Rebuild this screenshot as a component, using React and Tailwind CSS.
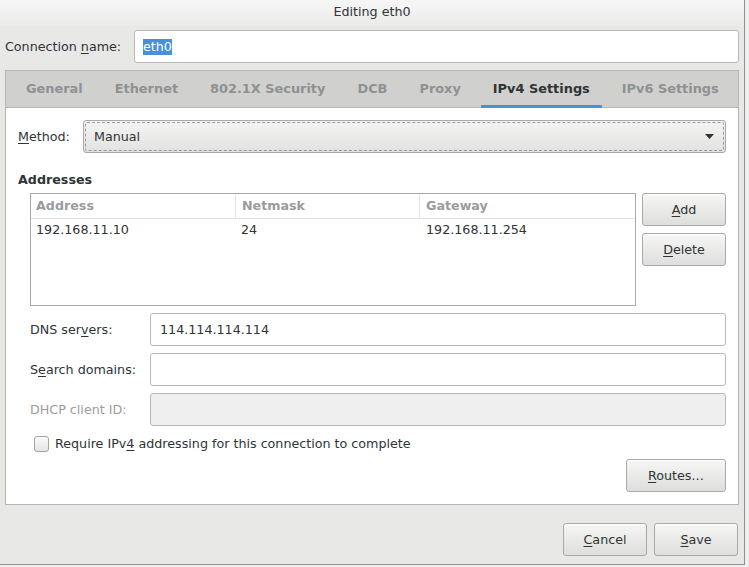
import React from 'react'

const font = { fontFamily: '"DejaVu Sans", "Noto Sans", sans-serif' }

function Btn({ children, className = '' }) {
  return (
    <button
      className={
        'h-[33px] rounded-[3px] border border-[#a9a9a7] bg-gradient-to-b from-[#f6f6f5] to-[#dededd] text-[12.7px] text-[#2e3436] shadow-[inset_0_1px_0_#ffffff] ' +
        className
      }
    >
      {children}
    </button>
  )
}

function Entry({ value, disabled }) {
  return (
    <div
      className={
        'h-[33px] flex-1 rounded-[3px] border border-[#b8b8b5] flex items-center pl-[9px] text-[12.7px] text-[#2e3436] ' +
        (disabled ? 'bg-[#efefef]' : 'bg-white')
      }
    >
      {value}
    </div>
  )
}

const tabs = ['General', 'Ethernet', '802.1X Security', 'DCB', 'Proxy', 'IPv4 Settings', 'IPv6 Settings']

export default function App() {
  return (
    <div className="w-[749px] h-[567px] bg-[#f0f0f0] overflow-hidden" style={font}>
      <div className="w-[745px] h-[565px] bg-[#e8e8e7] border-r border-b border-[#8f8f8f] flex flex-col">
        {/* title bar */}
        <div className="h-[26px] bg-gradient-to-b from-[#f6f6f6] to-[#ebebea] flex items-center justify-center text-[12.7px] text-[#2e3436] pb-[2px]">
          Editing eth0
        </div>

        <div className="flex flex-col pl-[5px] pr-[5px]">
          {/* connection name */}
          <div className="mt-[4px] flex items-center">
            <div className="w-[129px] text-[12.7px] text-[#2e3436]">
              Connection <u className="underline-offset-2">n</u>ame:
            </div>
            <div className="h-[33px] flex-1 rounded-[3px] border border-[#b8b8b5] bg-white flex items-center pl-[8px] text-[12.7px]">
              <span className="bg-[#4a90d9] text-white leading-[16px]">eth0</span>
            </div>
          </div>

          {/* notebook */}
          <div className="mt-[7px] h-[435px] border border-[#b6b6b3] flex flex-col">
            <div className="h-[37px] bg-[#d0d0ce] border-b border-[#b6b6b3] flex pl-[8px] gap-[8px]">
              {tabs.map((t) => (
                <div
                  key={t}
                  className={
                    'px-[12px] flex items-center text-[12.9px] font-bold border-b-[3px] pt-[1px] mb-[-1px] ' +
                    (t === 'IPv4 Settings'
                      ? 'text-[#2e3436] border-[#4a90d9]'
                      : 'text-[#8f9192] border-transparent')
                  }
                >
                  {t}
                </div>
              ))}
            </div>

            <div className="flex-1 bg-white p-[12px] flex flex-col text-[12.7px] text-[#2e3436]">
              {/* method */}
              <div className="flex items-center">
                <div className="w-[65px]">
                  <u className="underline-offset-2">M</u>ethod:
                </div>
                <div className="h-[33px] flex-1 rounded-[3px] border border-[#a9a9a7] bg-gradient-to-b from-[#f4f4f3] to-[#e2e2e1] p-[1px]">
                  <div className="h-full border border-dashed border-[#9a9a98] rounded-[2px] flex items-center pl-[8px] pr-[9px] justify-between">
                    <span>Manual</span>
                    <svg width="9" height="5" viewBox="0 0 9 5">
                      <path d="M0 0 L9 0 L4.5 5 Z" fill="#2e3436" />
                    </svg>
                  </div>
                </div>
              </div>

              <div className="mt-[18px] font-bold leading-[17px]">Addresses</div>

              {/* addresses */}
              <div className="mt-[5px] flex gap-[6px] pl-[12px]">
                <div className="w-[606px] h-[113px] border border-[#a9a9a7] bg-white flex flex-col">
                  <div className="h-[25px] flex border-b border-[#e3e3e2] font-bold text-[#9a9c9d]">
                    <div className="w-[205px] border-r border-[#e3e3e2] pl-[5px] flex items-center">Address</div>
                    <div className="w-[184px] border-r border-[#e3e3e2] pl-[6px] flex items-center">Netmask</div>
                    <div className="flex-1 pl-[6px] flex items-center">Gateway</div>
                  </div>
                  <div className="h-[22px] flex items-center">
                    <div className="w-[205px] pl-[5px]">192.168.11.10</div>
                    <div className="w-[184px] pl-[5px]">24</div>
                    <div className="flex-1 pl-[6px]">192.168.11.254</div>
                  </div>
                </div>
                <div className="flex flex-col gap-[7px]">
                  <Btn className="w-[84px]">
                    <u className="underline-offset-2">A</u>dd
                  </Btn>
                  <Btn className="w-[84px]">
                    <u className="underline-offset-2">D</u>elete
                  </Btn>
                </div>
              </div>

              {/* entries */}
              <div className="mt-[7px] pl-[12px] flex flex-col gap-[7px]">
                <div className="flex items-center">
                  <div className="w-[120px]">
                    DNS ser<u className="underline-offset-2">v</u>ers:
                  </div>
                  <Entry value="114.114.114.114" />
                </div>
                <div className="flex items-center">
                  <div className="w-[120px]">
                    S<u className="underline-offset-2">e</u>arch domains:
                  </div>
                  <Entry value="" />
                </div>
                <div className="flex items-center">
                  <div className="w-[120px] text-[#9a9c9d]">DHCP client ID:</div>
                  <Entry value="" disabled />
                </div>
              </div>

              <div className="mt-[8px] pl-[16px] flex items-center gap-[6px]">
                <div className="w-[15px] h-[16px] rounded-[3px] border border-[#a4a4a2] bg-gradient-to-b from-[#fbfbfb] to-[#e4e4e3]" />
                <span>
                  Require IPv<u className="underline-offset-2">4</u> addressing for this connection to complete
                </span>
              </div>

              <div className="mt-auto flex justify-end">
                <Btn className="w-[100px]">
                  <u className="underline-offset-2">R</u>outes…
                </Btn>
              </div>
            </div>
          </div>

          {/* dialog buttons */}
          <div className="mt-[18px] flex justify-end gap-[7px] pr-[1px]">
            <Btn className="w-[84px]">
              <u className="underline-offset-2">C</u>ancel
            </Btn>
            <Btn className="w-[84px]">
              <u className="underline-offset-2">S</u>ave
            </Btn>
          </div>
        </div>
      </div>
    </div>
  )
}
